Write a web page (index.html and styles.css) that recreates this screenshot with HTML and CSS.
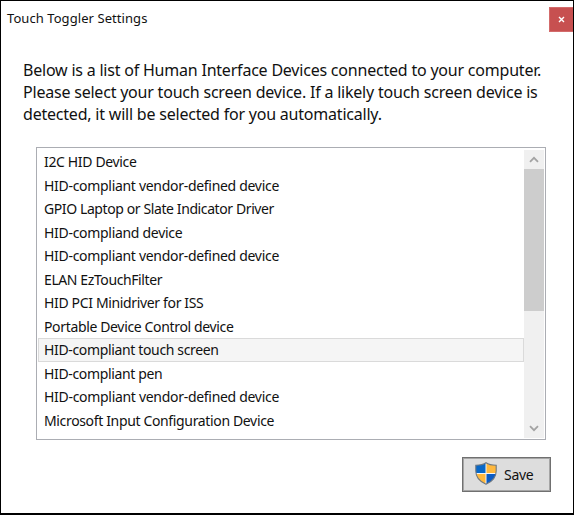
FILE: index.html
```html
<!DOCTYPE html>
<html lang="en">
<head>
<meta charset="utf-8">
<title>Touch Toggler Settings</title>
<link rel="stylesheet" href="styles.css">
</head>
<body>
<div class="window">
  <header class="titlebar">
    <h1 class="title">Touch Toggler Settings</h1>
    <button class="close" aria-label="Close"><svg width="7" height="7" viewBox="0 0 7 7"><path d="M1 1L6 6M6 1L1 6" stroke="#fff" stroke-width="1.4"/></svg></button>
  </header>
  <main class="content">
    <p class="intro">Below is a list of Human Interface Devices connected to your computer.<br>Please select your touch screen device. If a likely touch screen device is<br>detected, it will be selected for you automatically.</p>
    <div class="listbox">
      <ul class="devices">
        <li>I2C HID Device</li>
        <li class="loose">HID-compliant vendor-defined device</li>
        <li class="tight">GPIO Laptop or Slate Indicator Driver</li>
        <li class="loose">HID-compliand device</li>
        <li class="loose">HID-compliant vendor-defined device</li>
        <li class="tight">ELAN EzTouchFilter</li>
        <li>HID PCI Minidriver for ISS</li>
        <li>Portable Device Control device</li>
        <li class="selected">HID-compliant touch screen</li>
        <li>HID-compliant pen</li>
        <li class="loose">HID-compliant vendor-defined device</li>
        <li>Microsoft Input Configuration Device</li>
      </ul>
      <div class="scrollbar">
        <span class="arrow"><svg width="10" height="7" viewBox="0 0 10 7"><path d="M1 5.8L5 1.8L9 5.8" fill="none" stroke="#a3a3a3" stroke-width="1.8"/></svg></span>
        <div class="thumb"></div>
        <span class="arrow down"><svg width="10" height="7" viewBox="0 0 10 7"><path d="M1 1.2L5 5.2L9 1.2" fill="none" stroke="#a3a3a3" stroke-width="1.8"/></svg></span>
      </div>
    </div>
  </main>
  <footer class="actions">
    <button class="save">
      <svg class="shield" width="22" height="23" viewBox="0 0 22 23">
        <defs><clipPath id="shield"><path d="M11 .8C8.5 2.6 4.5 3.2 .8 3.2V9C.8 15.3 4.5 19.5 11 22.2C17.5 19.5 21.2 15.3 21.2 9V3.2C17.5 3.2 13.5 2.6 11 .8Z"/></clipPath></defs>
        <g clip-path="url(#shield)">
          <path d="M0 0H22V23H0Z" fill="#f3f5f7"/>
          <path d="M0 0H10.5V11H0Z" fill="#0868c8"/>
          <path d="M11.5 0H22V11H11.5Z" fill="#ffb83d"/>
          <path d="M0 12H10.5V23H0Z" fill="#ffb83d"/>
          <path d="M11.5 12H22V23H11.5Z" fill="#0b5bc4"/>
        </g>
        <path d="M11 .8C8.5 2.6 4.5 3.2 .8 3.2V9C.8 15.3 4.5 19.5 11 22.2C17.5 19.5 21.2 15.3 21.2 9V3.2C17.5 3.2 13.5 2.6 11 .8Z" fill="none" stroke="#6f7880" stroke-width="1.1"/>
      </svg>
      <span>Save</span>
    </button>
  </footer>
</div>
</body>
</html>
```
FILE: styles.css
```css
* { box-sizing: border-box; }
body {
  margin: 0;
  background: #000;
  color: #111;
  font-family: "Noto Sans", "Open Sans", sans-serif;
}
.window {
  width: 574px;
  height: 515px;
  border: 1px solid #000;
  border-bottom-width: 2px;
  background: #fff;
  display: flex;
  flex-direction: column;
  overflow: hidden;
}
.titlebar {
  height: 58px;
  flex: none;
  display: flex;
  justify-content: space-between;
  align-items: flex-start;
  padding: 6px 0 0 6px;
}
.title {
  margin: 1px 0 0;
  font-size: 13px;
  font-weight: 400;
  line-height: 20px;
  letter-spacing: 0.07px;
}
.close {
  width: 24px;
  height: 25px;
  padding: 0;
  border: 1px solid #d36b6b;
  border-right: 0;
  background: #c75050;
  display: flex;
  align-items: center;
  justify-content: center;
}
.content { padding: 0 27px 0 35px; }
.intro {
  margin: 0 -27px 0 -13px;
  font-size: 16px;
  line-height: 22px;
  white-space: nowrap;
  letter-spacing: -0.21px;
}
.listbox {
  height: 293px;
  margin-top: 22px;
  border: 1px solid #abadb3;
  display: flex;
  padding: 2px 1px 1px;
}
.devices {
  flex: 1;
  margin: 0;
  padding: 0;
  list-style: none;
  font-size: 14px;
  letter-spacing: -0.35px;
}
.devices li {
  height: 23.55px;
  line-height: 21px;
  padding-left: 5px;
  border: 1px solid transparent;
  white-space: nowrap;
}
.devices .loose { letter-spacing: -0.3px; }
.devices .tight { letter-spacing: -0.4px; }
.devices .selected {
  background: #f5f5f5;
  border-color: #dadada;
}
.scrollbar {
  width: 20px;
  background: #f0f0f0;
  display: flex;
  flex-direction: column;
}
.arrow {
  height: 19px;
  display: flex;
  align-items: center;
  justify-content: center;
}
.thumb { height: 142px; background: #cdcdcd; }
.down { margin-top: auto; }
.actions {
  display: flex;
  justify-content: flex-end;
  padding: 17px 22px 0 0;
}
.save {
  width: 89px;
  height: 35px;
  border: 1px solid #707070;
  outline: 1px solid #a5a5a5;
  outline-offset: -2px;
  background: #ddd;
  color: #111;
  display: flex;
  align-items: center;
  gap: 7px;
  padding: 0 0 0 12px;
  font: 14px "Noto Sans", "Open Sans", sans-serif;
  letter-spacing: -0.3px;
}
.shield { flex: none; margin-top: -2px; }
```
